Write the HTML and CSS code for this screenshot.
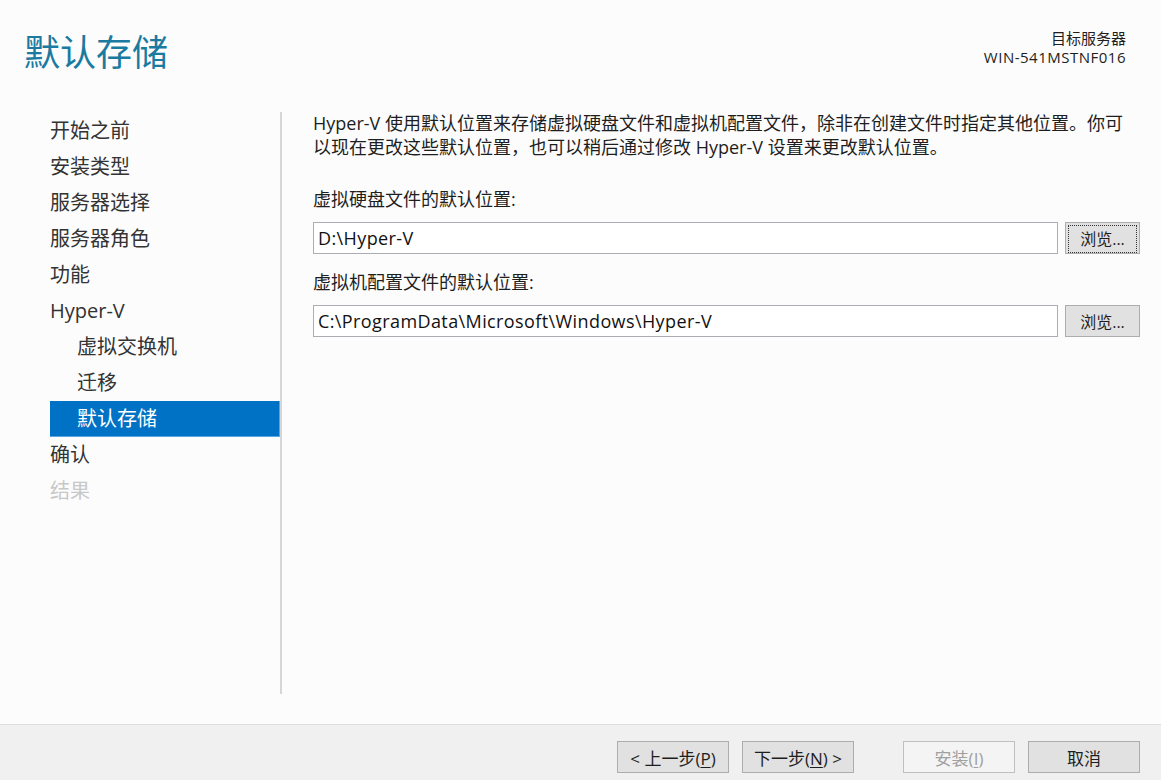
FILE: index.html
```html
<!DOCTYPE html>
<html lang="zh-CN">
<head>
    <meta charset="UTF-8">
    <meta name="viewport" content="width=device-width, initial-scale=1.0">
    <title>添加角色和功能向导</title>
    <link rel="stylesheet" href="styles.css">
</head>
<body>
<div class="wizard">
    <div class="header">
        <h1 class="title">默认存储</h1>
        <div class="target">
            <div>目标服务器</div>
            <div class="server">WIN-541MSTNF016</div>
        </div>
    </div>

    <div class="main">
        <ul class="steps">
            <li>开始之前</li>
            <li>安装类型</li>
            <li>服务器选择</li>
            <li>服务器角色</li>
            <li>功能</li>
            <li>Hyper-V</li>
            <li class="sub">虚拟交换机</li>
            <li class="sub">迁移</li>
            <li class="sub active">默认存储</li>
            <li>确认</li>
            <li class="off">结果</li>
        </ul>

        <div class="content">
            <p class="intro">Hyper-V 使用默认位置来存储虚拟硬盘文件和虚拟机配置文件，除非在创建文件时指定其他位置。你可以现在更改这些默认位置，也可以稍后通过修改 Hyper-V 设置来更改默认位置。</p>

            <label class="field-label">虚拟硬盘文件的默认位置:</label>
            <div class="field">
                <input class="path" type="text" value="D:\Hyper-V">
                <button class="btn browse focused"><span>浏览...</span></button>
            </div>

            <label class="field-label">虚拟机配置文件的默认位置:</label>
            <div class="field">
                <input class="path" type="text" value="C:\ProgramData\Microsoft\Windows\Hyper-V">
                <button class="btn browse"><span>浏览...</span></button>
            </div>
        </div>
    </div>

    <div class="footer">
        <button class="btn nav">&lt; 上一步(<u>P</u>)</button>
        <button class="btn nav">下一步(<u>N</u>) &gt;</button>
        <button class="btn nav install" disabled>安装(<u>I</u>)</button>
        <button class="btn nav">取消</button>
    </div>
</div>
</body>
</html>
```

FILE: styles.css
```css
body{
    margin: 0;
    background: #fcfcfc;
    font-family: "Open Sans", "Noto Sans CJK SC", sans-serif;
    color: #1e1e1e;
}

.wizard{
    height: 780px;
    display: flex;
    flex-direction: column;
}

/* ---------------- header ---------------- */
.header{
    height: 100px;
    display: flex;
    justify-content: space-between;
    padding: 0 35px 0 24px;
}
.title{
    margin: 31px 0 0;
    font-size: 36px;
    line-height: 44px;
    font-weight: normal;
    color: #1a7a9f;
}
.target{
    margin-top: 29px;
    text-align: right;
    font-size: 15px;
    line-height: 19px;
}
.target .server{
    letter-spacing: 0.5px;
}

/* ---------------- main ---------------- */
.main{
    flex: 1;
    display: flex;
    padding-bottom: 30px;
}

.steps{
    list-style: none;
    margin: 12px 0 0;
    padding: 1px 0 0 50px;
    width: 230px;
    border-right: 2px solid #d6d6d6;
    font-size: 20px;
    color: #333;
}
.steps li{
    height: 36px;
    line-height: 36px;
}
.steps li.sub{
    padding-left: 27px;
}
.steps li.active{
    background: #0072c6;
    color: #fff;
    box-shadow: inset -1px -1px 0 #5aa7e0;
}
.steps li.off{
    color: #c8c8c8;
}

.content{
    flex: 1;
    padding: 11px 21px 0 31px;
}
.intro{
    margin: 0 0 28px;
    font-size: 18px;
    line-height: 24px;
}
.field-label{
    display: block;
    font-size: 18px;
    line-height: 24px;
    margin-bottom: 11px;
}
.field{
    display: flex;
    gap: 7px;
    height: 32px;
    margin-bottom: 16px;
}
.path{
    flex: 1;
    margin: 0;
    border: 1px solid #abadb3;
    background: #fff;
    padding: 0 4px;
    font-family: inherit;
    font-size: 18px;
    letter-spacing: 0.4px;
    color: #111;
    outline: none;
}

/* ---------------- buttons ---------------- */
.btn{
    font-family: inherit;
    background: #e1e1e1;
    border: 1px solid #adadad;
    color: #1e1e1e;
    padding: 0;
    margin: 0;
}
.browse{
    width: 75px;
    font-size: 16px;
}
.browse span{
    display: block;
    margin: 2px;
    height: 26px;
    line-height: 26px;
    border: 1px dotted transparent;
}
.browse.focused span{
    border-color: #333;
}

.footer{
    height: 56px;
    box-sizing: border-box;
    background: #f0f0f0;
    border-top: 1px solid #dcdcdc;
    display: flex;
    justify-content: flex-end;
    align-items: flex-start;
    padding: 16px 21px 0 0;
}
.nav{
    width: 112px;
    height: 32px;
    font-size: 17px;
    margin-left: 13px;
}
.nav u{
    text-underline-offset: 2px;
}
.install{
    margin-left: 49px;
    background: #f4f4f4;
    border-color: #bfbfbf;
    color: #a0a0a0;
}
```
